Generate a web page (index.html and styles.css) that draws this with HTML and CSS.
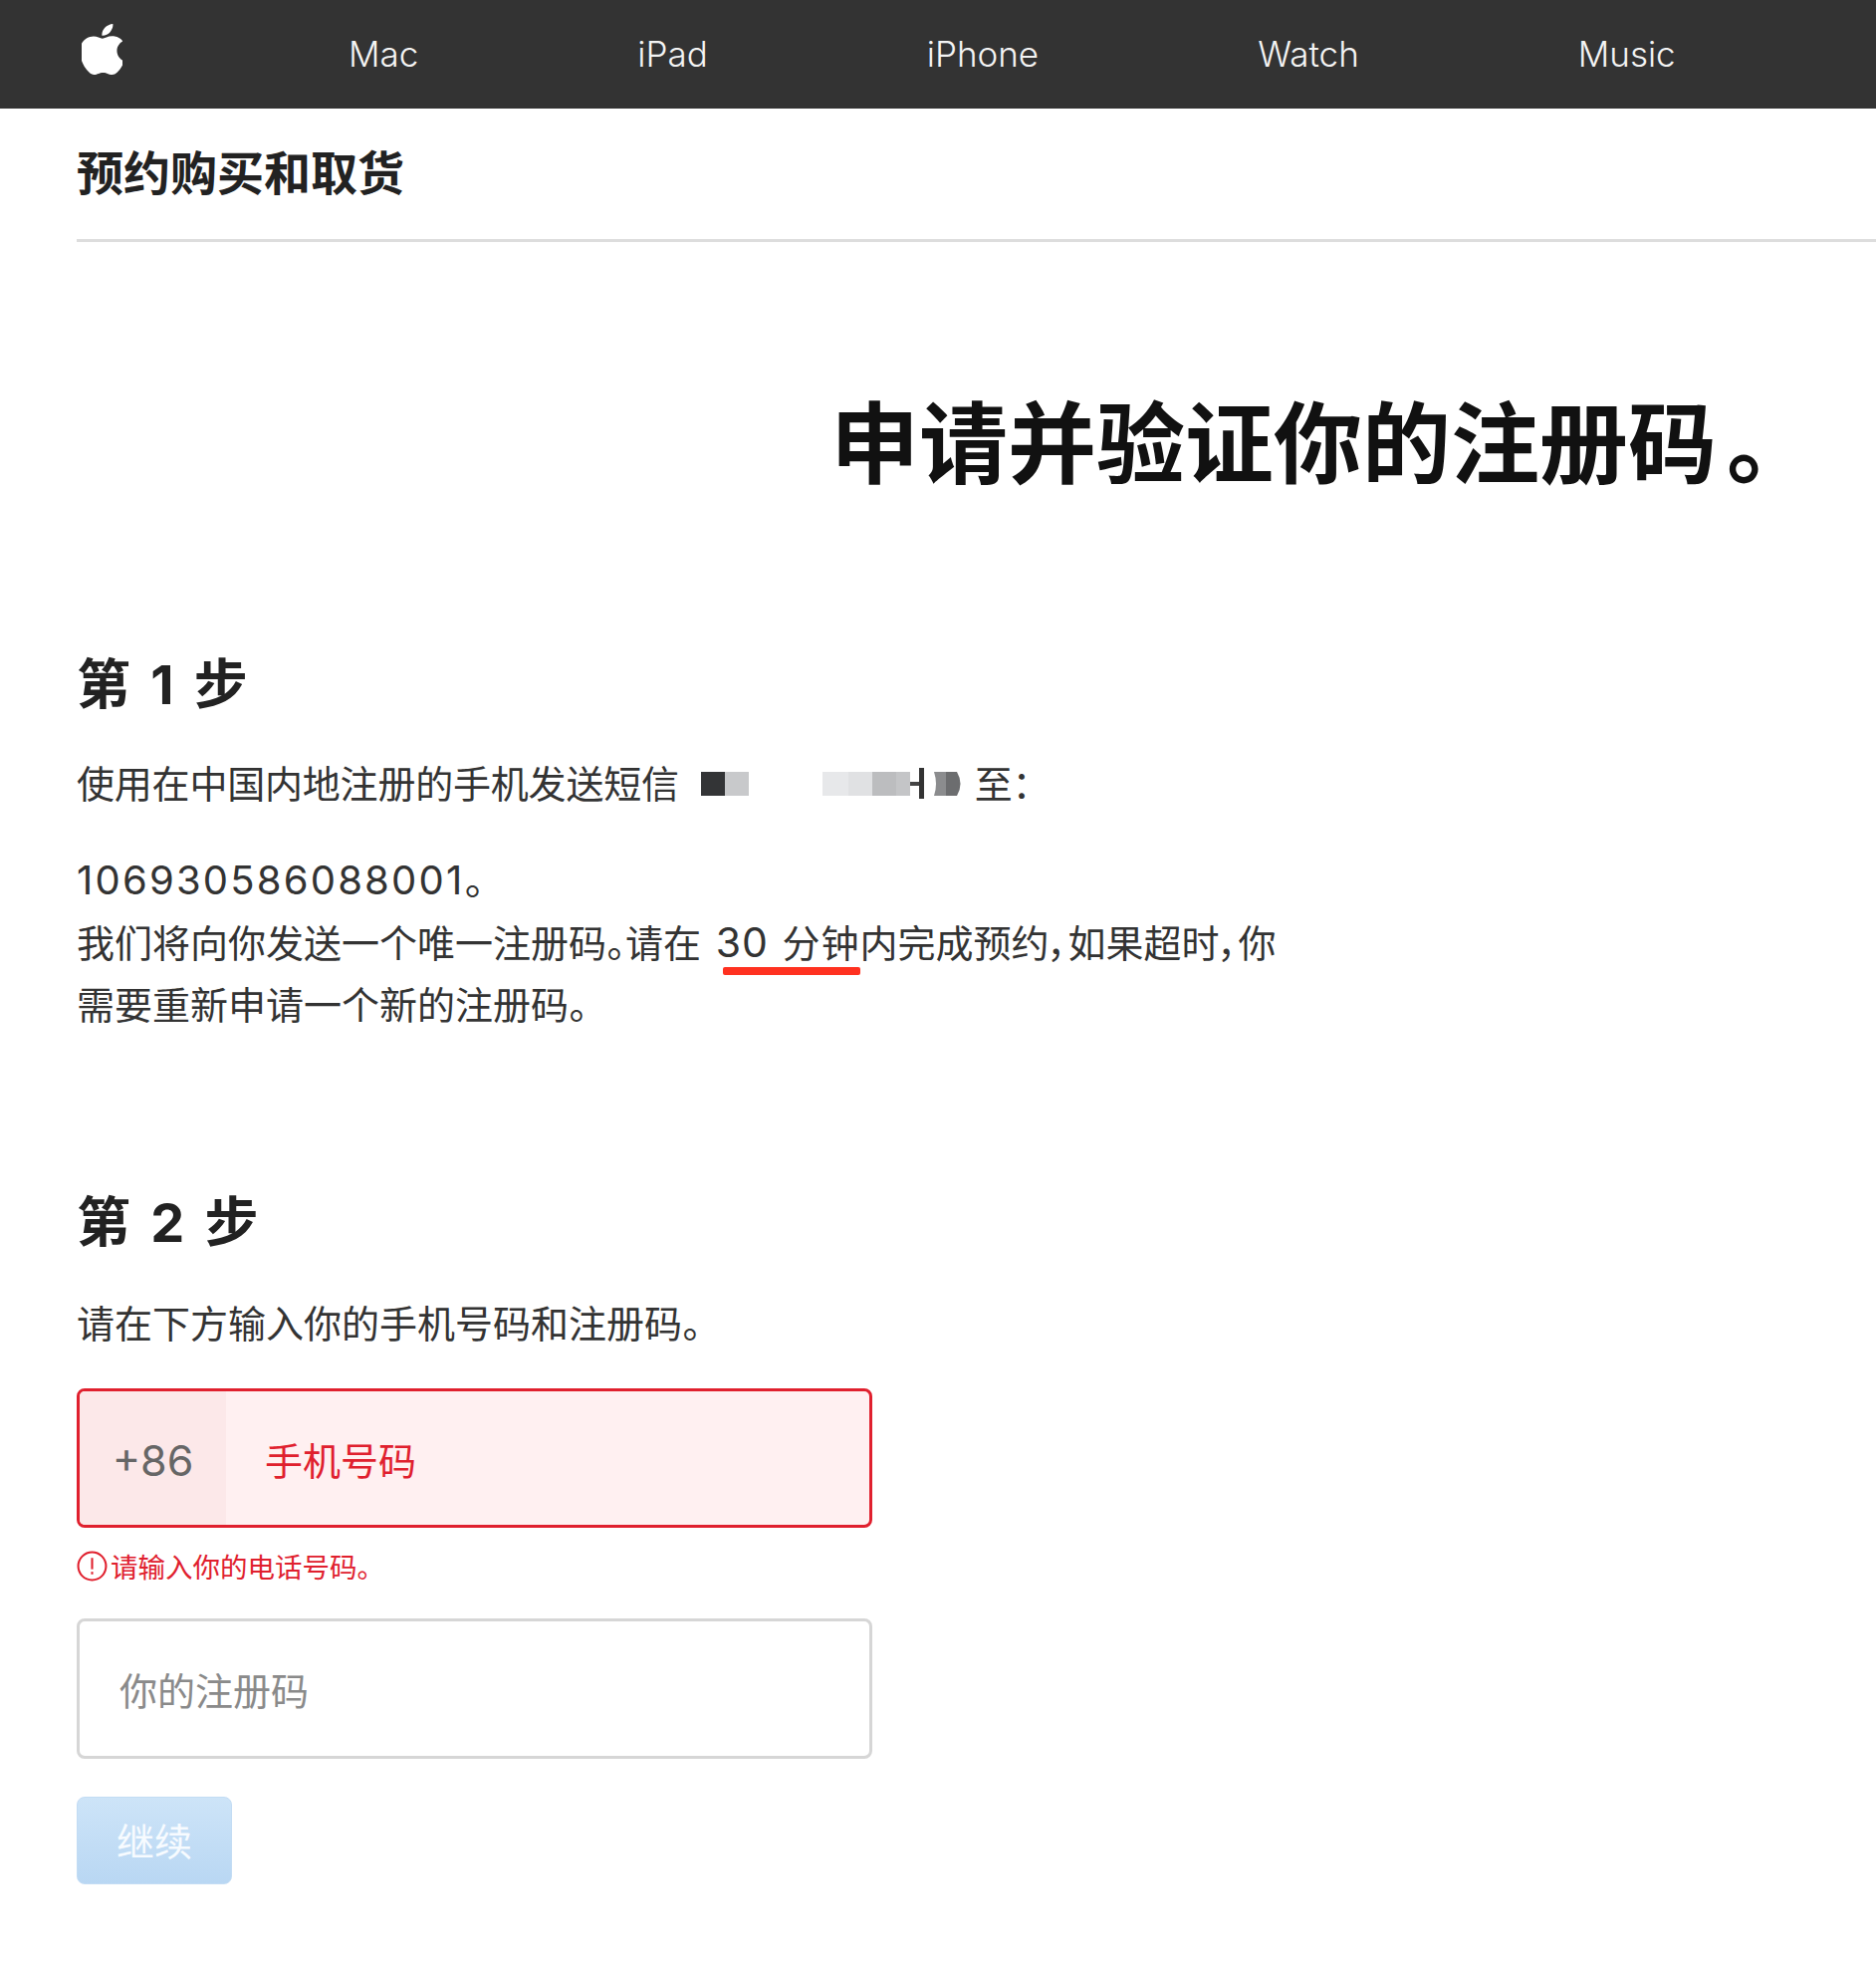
FILE: index.html
```html
<!DOCTYPE html>
<html lang="zh-CN">
<head>
    <meta charset="UTF-8" />
    <title>预约购买和取货</title>
    <link rel="stylesheet" href="styles.css">
</head>
<body>
<nav class="topnav">
    <svg class="apple-logo" viewBox="3 0 18 24" preserveAspectRatio="none"><path d="M12.152 6.896c-.948 0-2.415-1.078-3.96-1.04-2.04.027-3.91 1.183-4.961 3.014-2.117 3.675-.546 9.103 1.519 12.09 1.013 1.454 2.208 3.09 3.792 3.039 1.52-.065 2.09-.987 3.935-.987 1.831 0 2.35.987 3.96.948 1.637-.026 2.676-1.48 3.676-2.948 1.156-1.688 1.636-3.325 1.662-3.415-.039-.013-3.182-1.221-3.22-4.857-.026-3.04 2.48-4.494 2.597-4.559-1.429-2.09-3.623-2.324-4.39-2.376-2-.156-3.675 1.09-4.61 1.09zM15.53 3.83c.843-1.012 1.4-2.427 1.245-3.83-1.207.052-2.662.805-3.532 1.818-.78.896-1.454 2.338-1.273 3.714 1.338.104 2.715-.688 3.559-1.701"/></svg>
    <a href="#">Mac</a>
    <a href="#">iPad</a>
    <a href="#">iPhone</a>
    <a href="#">Watch</a>
    <a href="#">Music</a>
</nav>

<div class="subhead">预约购买和取货</div>

<h1 class="hero">申请并验证你的注册码<span class="hero-stop">。</span></h1>

<main class="content">
    <h2 class="step step-first">第 1 步</h2>
    <p class="text sms-line">使用在中国内地注册的手机发送短信
        <svg class="mosaic" viewBox="0 0 261 34" width="261" height="34">
            <rect x="0" y="5" width="24" height="24" fill="#333436"/>
            <rect x="24" y="5" width="24" height="24" fill="#c8c9cb"/>
            <rect x="122" y="5" width="26" height="24" fill="#e7e8ea"/>
            <rect x="148" y="5" width="24" height="24" fill="#e0e1e3"/>
            <rect x="172" y="5" width="24" height="24" fill="#bcbdbf"/>
            <rect x="196" y="5" width="14" height="24" fill="#c4c5c7"/>
            <rect x="210" y="15" width="10" height="4" fill="#444"/>
            <rect x="219" y="1" width="5" height="31" fill="#333"/>
            <path d="M234 5h12v24h-12q4-12 0-24z" fill="#8b8c8e"/>
            <path d="M246 5h11q7 12 0 24h-11z" fill="#6c6d6f"/>
        </svg>
        至：</p>
    <p class="text number">106930586088001。</p>
    <p class="text notice">我们将向你发送一个唯一注册码。请在 <span class="mark"><span class="mark-num">30</span> 分钟</span>内完成预约，如果超时，你需要重新申请一个新的注册码。</p>

    <h2 class="step step-second">第 2 步</h2>
    <p class="text intro">请在下方输入你的手机号码和注册码。</p>

    <div class="field field-error">
        <span class="prefix">+86</span>
        <input type="text" placeholder="手机号码">
    </div>
    <div class="error-msg">
        <svg class="error-icon" viewBox="0 0 30 30" width="31" height="31">
            <circle cx="15" cy="15" r="13.5" fill="none" stroke="#e0202e" stroke-width="2"/>
            <rect x="14" y="7" width="2" height="11" fill="#e0202e"/>
            <rect x="14" y="20.500" width="2" height="2.500" fill="#e0202e"/>
        </svg>
        <span>请输入你的电话号码。</span>
    </div>
    <div class="field field-code">
        <input type="text" placeholder="你的注册码">
    </div>
    <button class="continue" disabled>继续</button>
</main>
</body>
</html>
```

FILE: styles.css
```css
body {
    margin: 0;
    background: #fff;
    color: #333;
    font-family: "Inter", "Noto Sans CJK SC", sans-serif;
}

.topnav {
    display: flex;
    align-items: center;
    gap: 220px;
    height: 109px;
    padding-left: 82px;
    background: #333;
}

.topnav a {
    padding-bottom: 2px;
    color: #f4f4f4;
    font-size: 35px;
    font-weight: 300;
    text-decoration: none;
}

.apple-logo {
    width: 41px;
    height: 51px;
    margin: -10px 7px 0 0;
    fill: #fff;
}

.subhead {
    height: 131px;
    margin-left: 77px;
    border-bottom: 3px solid #ddd;
    color: #222;
    font-size: 47px;
    font-weight: 700;
    line-height: 130px;
}

.hero {
    margin: 153px 0 0;
    padding-right: 61px;
    color: #111;
    font-size: 89px;
    font-weight: 700;
    line-height: 100px;
    text-align: right;
}

.hero-stop {
    margin-left: 10px;
}

.content {
    padding-left: 77px;
}

.step {
    margin: 0;
    color: #222;
    font-size: 54px;
    font-weight: 700;
    line-height: 70px;
    word-spacing: 7.5px;
}

.step-first {
    margin-top: 157px;
}

.step-second {
    margin-top: 153px;
}

.text {
    margin: 0;
    font-size: 38px;
    line-height: 62px;
    font-feature-settings: "palt";
}

.sms-line {
    margin-top: 33px;
    letter-spacing: -0.2px;
}

.mosaic {
    margin: 0 3px 0 12px;
    vertical-align: -3px;
}

.number {
    margin-top: 35px;
    font-size: 40px;
    letter-spacing: 2.2px;
}

.notice {
    width: 1225px;
    margin-top: 1px;
}

.mark {
    position: relative;
    margin-left: 4px;
    letter-spacing: 1px;
    word-spacing: 2px;
}

.mark-num {
    font-size: 41px;
    line-height: 1;
}

.mark::after {
    content: "";
    position: absolute;
    left: 7px;
    right: 0;
    bottom: -9px;
    height: 8px;
    border-radius: 2px;
    background: #ff3120;
}

.intro {
    margin-top: 35px;
}

.field {
    display: flex;
    box-sizing: border-box;
    width: 799px;
    height: 140px;
    margin-top: 34px;
    border: 3px solid #d6d6d6;
    border-radius: 8px;
    overflow: hidden;
}

.field input {
    flex: 1;
    min-width: 0;
    padding: 6px 39px 0;
    border: none;
    outline: none;
    background: transparent;
    font-family: inherit;
    font-size: 38px;
}

.field input::placeholder {
    color: #8a8a8a;
}

.field-error {
    border-color: #e0202e;
    background: #fff0f1;
}

.field-error input::placeholder {
    color: #e0202e;
}

.prefix {
    display: flex;
    align-items: center;
    justify-content: center;
    width: 147px;
    padding-top: 4px;
    box-sizing: border-box;
    background: #fce8e9;
    color: #666;
    font-size: 43px;
}

.error-msg {
    display: flex;
    align-items: center;
    gap: 3px;
    height: 36px;
    margin-top: 20px;
    color: #e0202e;
    font-size: 27.5px;
}

.field-code {
    height: 141px;
    margin-top: 35px;
}

.field-code input {
    padding: 4px 40px 0;
}

.continue {
    display: block;
    width: 156px;
    height: 88px;
    margin-top: 38px;
    padding-bottom: 4px;
    border: 1px solid #c3dcf4;
    border-radius: 8px;
    background: linear-gradient(#cde4f8, #b9d7f3);
    color: #f7fbff;
    font-family: inherit;
    font-size: 38px;
}
```
